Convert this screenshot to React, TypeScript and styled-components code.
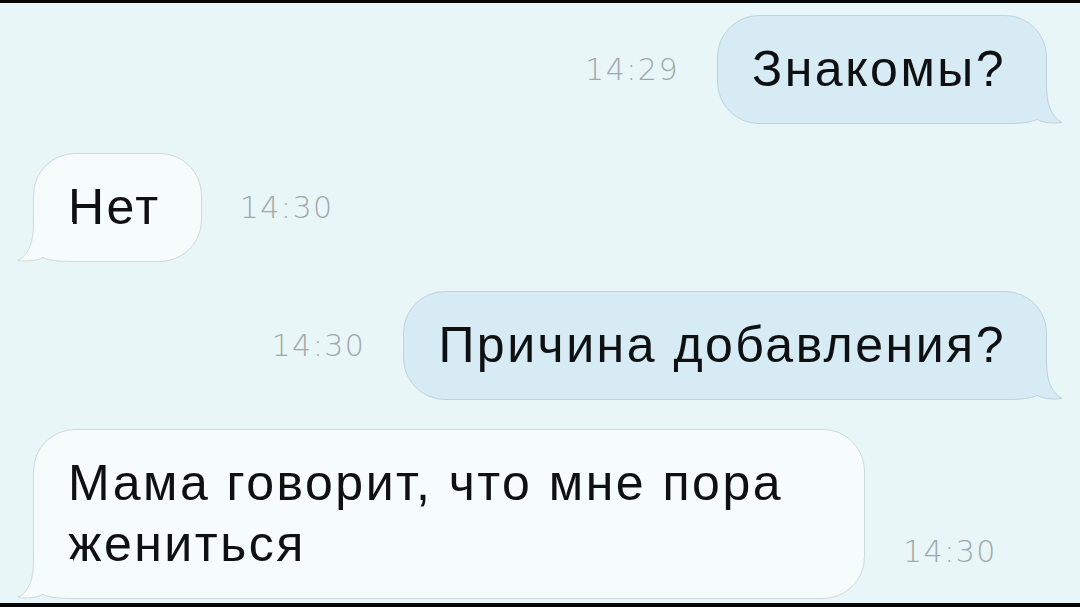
import React from 'react';
import styled, { createGlobalStyle } from 'styled-components';

// Types
type Side = 'in' | 'out';

interface Message {
  id: number;
  side: Side;
  text: string;
  time: string;
  maxWidth?: number;
}

const messages: Message[] = [
  { id: 1, side: 'out', text: 'Знакомы?', time: '14:29' },
  { id: 2, side: 'in', text: 'Нет', time: '14:30' },
  { id: 3, side: 'out', text: 'Причина добавления?', time: '14:30' },
  { id: 4, side: 'in', text: 'Мама говорит, что мне пора жениться', time: '14:30', maxWidth: 832 },
];

const palette = {
  page: '#e9f6f8',
  outFill: '#d6ebf4',
  outBorder: '#bfd3db',
  inFill: '#f6fbfc',
  inBorder: '#cfd9dc',
  text: '#0e1011',
  time: '#9ea8ad',
};

// Styled Components
const GlobalStyle = createGlobalStyle`
  html, body {
    margin: 0;
    padding: 0;
    background: #060606;
  }
  * {
    box-sizing: border-box;
  }
`;

const Screen = styled.div`
  width: 1080px;
  height: 607px;
  overflow: hidden;
  background: ${palette.page};
  border-top: 3px solid #060606;
  border-bottom: 4px solid #060606;
`;

const ChatList = styled.div`
  display: flex;
  flex-direction: column;
  gap: 29px;
  padding: 12px 33px 0 33px;
`;

const Row = styled.div<{ $side: Side; $bottom?: boolean }>`
  display: flex;
  flex-direction: ${({ $side }) => ($side === 'out' ? 'row' : 'row-reverse')};
  justify-content: flex-end;
  align-items: ${({ $bottom }) => ($bottom ? 'flex-end' : 'center')};
  gap: 38px;
  margin-right: ${({ $side }) => ($side === 'out' ? '0' : 'auto')};
`;

const Bubble = styled.div<{ $side: Side; $maxWidth?: number }>`
  position: relative;
  max-width: ${({ $maxWidth }) => ($maxWidth ? `${$maxWidth}px` : 'none')};
  padding: 23px 40px 23px 34px;
  border-radius: 42px;
  background: ${({ $side }) => ($side === 'out' ? palette.outFill : palette.inFill)};
  border: 1px solid ${({ $side }) => ($side === 'out' ? palette.outBorder : palette.inBorder)};
  font-family: 'Liberation Sans', Arial, sans-serif;
  font-size: 50px;
  line-height: 61px;
  letter-spacing: 2.5px;
  color: ${palette.text};
`;

const Tail = styled.svg<{ $side: Side }>`
  position: absolute;
  bottom: -1px;
  width: 56px;
  height: 40px;
  overflow: visible;
  ${({ $side }) => ($side === 'out' ? 'right: -17px;' : 'left: -17px; transform: scaleX(-1);')}
`;

const Time = styled.span<{ $bottomGap?: boolean }>`
  font-family: 'DejaVu Sans', 'Liberation Sans', sans-serif;
  font-weight: 200;
  font-size: 30px;
  letter-spacing: 1.5px;
  color: ${palette.time};
  margin-bottom: ${({ $bottomGap }) => ($bottomGap ? '30px' : '0')};
`;

const BubbleTail: React.FC<{ side: Side }> = ({ side }) => {
  const fill = side === 'out' ? palette.outFill : palette.inFill;
  const stroke = side === 'out' ? palette.outBorder : palette.inBorder;
  return (
    <Tail $side={side} viewBox="0 0 56 40">
      <path d="M0 0 H40 C40 20 44 32 55 38.5 C45 40 36 38.5 30 35.5 C23 38.5 14 40 0 40 Z" fill={fill} />
      <path
        d="M39.5 0 C39.5 20 43.5 32 55 38.5 C45 39.8 36 38.5 30 35.5 C23 38.5 14 39.5 0 39.5"
        fill="none"
        stroke={stroke}
        strokeWidth={1}
      />
    </Tail>
  );
};

// Component
export default function App() {
  return (
    <>
      <GlobalStyle />
      <Screen>
        <ChatList>
          {messages.map((m) => (
            <Row key={m.id} $side={m.side} $bottom={!!m.maxWidth}>
              <Time $bottomGap={!!m.maxWidth}>{m.time}</Time>
              <Bubble $side={m.side} $maxWidth={m.maxWidth}>
                {m.text}
                <BubbleTail side={m.side} />
              </Bubble>
            </Row>
          ))}
        </ChatList>
      </Screen>
    </>
  );
}
